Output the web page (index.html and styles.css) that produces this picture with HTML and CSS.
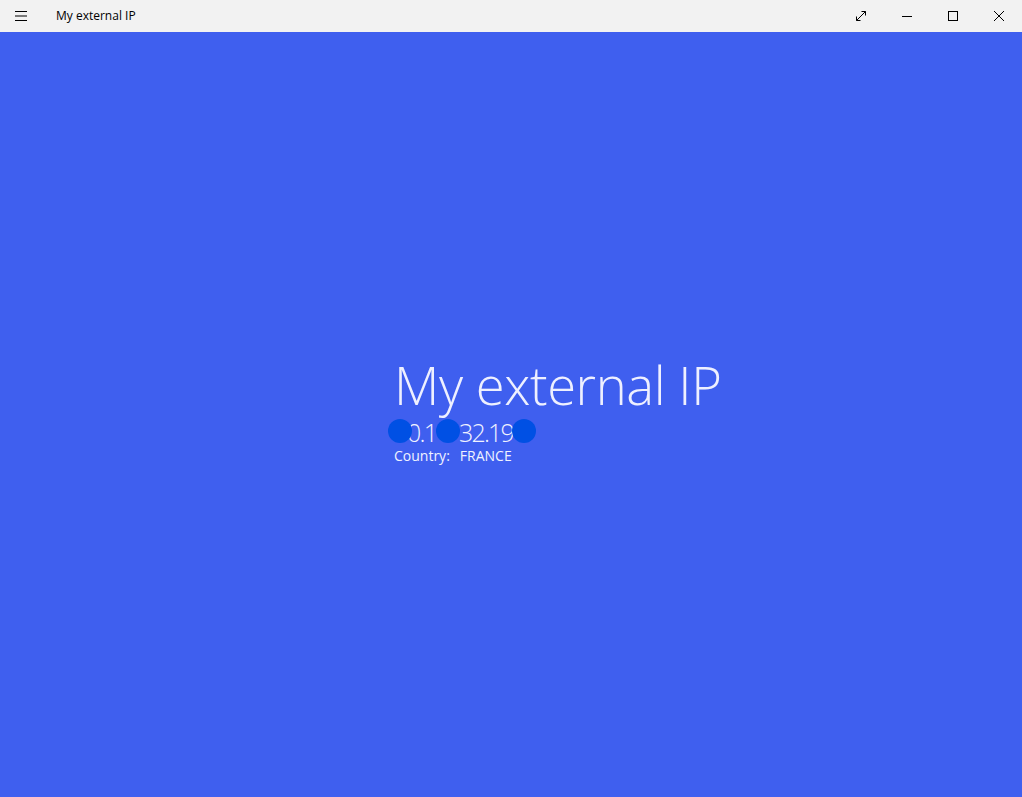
FILE: index.html
```html
<!DOCTYPE html>
<html>
<head>
<meta charset="utf-8">
<link rel="stylesheet" href="styles.css">
</head>
<body>
<div class="titlebar">
  <div class="tb-left">
    <svg class="hamb" width="12" height="10" viewBox="0 0 12 10"><path d="M0 0.5H12M0 5H12M0 9.5H12" stroke="#000" stroke-width="1"/></svg>
    <span class="tb-title">My external IP</span>
  </div>
  <div class="tb-buttons">
    <div class="tb-btn"><svg width="12" height="12" viewBox="0 0 12 12"><path d="M1.5 10.5L10.5 1.5M6.5 1.5H10.5V5.5M1.5 6.5V10.5H5.5" fill="none" stroke="#000" stroke-width="1"/></svg></div>
    <div class="tb-btn"><svg width="10" height="10" viewBox="0 0 10 10"><path d="M0 5.5H10" stroke="#000" stroke-width="1"/></svg></div>
    <div class="tb-btn"><svg width="10" height="10" viewBox="0 0 10 10"><rect x="0.5" y="0.5" width="9" height="9" fill="none" stroke="#000" stroke-width="1"/></svg></div>
    <div class="tb-btn"><svg width="10" height="10" viewBox="0 0 10 10"><path d="M0 0L10 10M10 0L0 10" stroke="#000" stroke-width="1"/></svg></div>
  </div>
</div>
<main class="content">
  <div class="panel">
    <h1 class="heading">My external IP</h1>
    <div class="ip-row">
      <span class="ip ip-a">0.1</span>
      <span class="ip ip-b">32.19</span>
      <span class="dot d1"></span>
      <span class="dot d2"></span>
      <span class="dot d3"></span>
    </div>
    <div class="country"><span class="lbl">Country:</span><span class="val">FRANCE</span></div>
  </div>
</main>
</body>
</html>
```
FILE: styles.css
```css
html, body {
  margin: 0;
  padding: 0;
  height: 100%;
}
body {
  display: flex;
  flex-direction: column;
  font-family: "Open Sans", "Liberation Sans", sans-serif;
  background: #3f5fef;
  overflow: hidden;
}
.titlebar {
  height: 32px;
  background: #f2f2f2;
  display: flex;
  justify-content: space-between;
  align-items: center;
  flex: none;
}
.tb-left {
  display: flex;
  align-items: center;
}
.hamb {
  margin-left: 15px;
  margin-top: -1px;
}
.tb-title {
  margin-left: 29px;
  font-size: 12px;
  color: #000;
  margin-top: -1px;
}
.tb-buttons {
  display: flex;
  height: 32px;
}
.tb-btn {
  width: 46px;
  height: 32px;
  display: flex;
  align-items: center;
  justify-content: center;
}
.content {
  flex: 1;
  padding-left: 394px;
  padding-top: 320px;
  color: #f0f2ff;
}
.panel {
  display: flex;
  flex-direction: column;
}
.heading {
  margin: 0;
  font-weight: 300;
  font-size: 52.5px;
  line-height: 66px;
  letter-spacing: -0.4px;
  color: #eef0ff;
}
.ip-row {
  position: relative;
  height: 28px;
  width: 150px;
}
.ip {
  position: absolute;
  top: 0;
  font-weight: 300;
  font-size: 25px;
  line-height: 28px;
  letter-spacing: -1.8px;
}
.ip-a { left: 13px; }
.ip-b { left: 65px; }
.dot {
  position: absolute;
  width: 24px;
  height: 24px;
  border-radius: 50%;
  background: #0050e4;
  top: 1px;
}
.d1 { left: -6px; }
.d2 { left: 42px; }
.d3 { left: 118px; }
.country {
  font-size: 14px;
  line-height: 20px;
  display: flex;
  gap: 10px;
}
```
